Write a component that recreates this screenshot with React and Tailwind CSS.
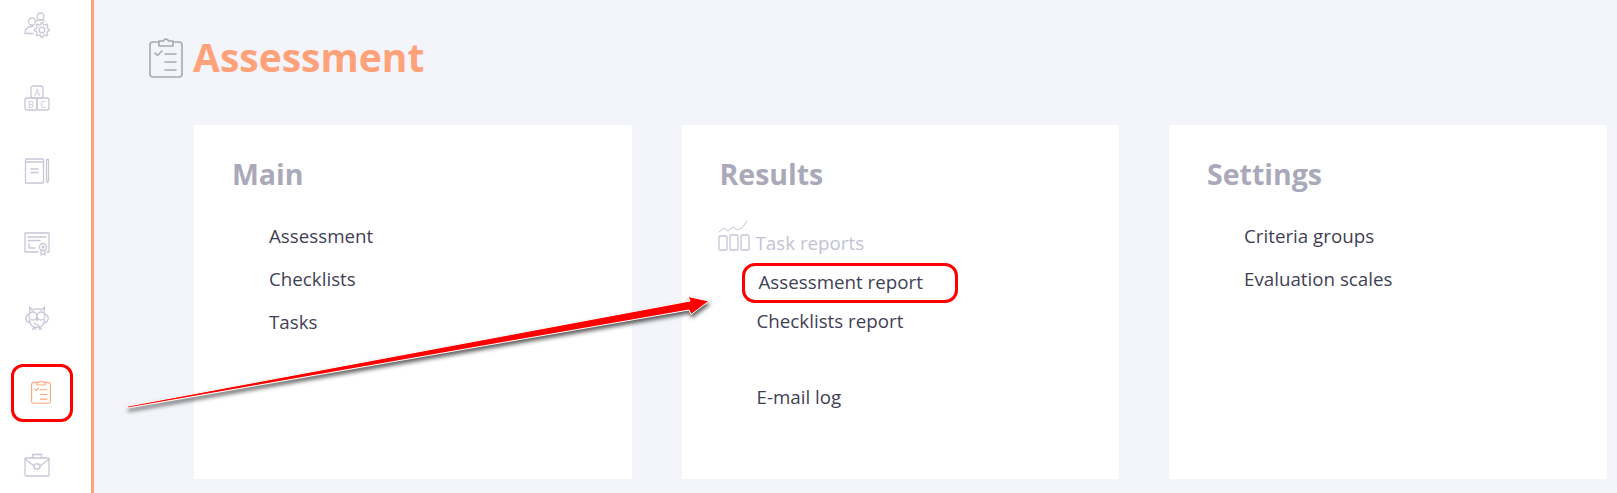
const font = { fontFamily: '"Open Sans", "Noto Sans", sans-serif' };

const stroke = {
  fill: 'none',
  stroke: 'currentColor',
  strokeWidth: 1.3,
  strokeLinecap: 'round',
  strokeLinejoin: 'round',
};

// outline of a toothed gear, built once
const gearPath = (cx, cy, outer, inner, teeth) => {
  const pts = [];
  const step = (Math.PI * 2) / teeth;
  for (let i = 0; i < teeth; i++) {
    const a = i * step;
    [[-0.3, inner], [-0.16, outer], [0.16, outer], [0.3, inner]].forEach(([t, r]) => {
      const b = a + t * step;
      pts.push(`${(cx + r * Math.cos(b)).toFixed(2)} ${(cy + r * Math.sin(b)).toFixed(2)}`);
    });
  }
  return `M${pts.join('L')}Z`;
};

function ClipboardIcon({ className, sw = 1.2 }) {
  return (
    <svg viewBox="0 0 34 42" className={className} {...stroke} strokeWidth={sw}>
      <path d="M10 6H4a3 3 0 0 0-3 3v29a3 3 0 0 0 3 3h26a3 3 0 0 0 3-3V9a3 3 0 0 0-3-3h-6" />
      <path d="M10 10V5h4.500a2.600 2.600 0 0 1 5 0H24v5z" />
      <path d="M6 17l2.500 2.500L13 15M16 18h11M16 26h11M16 34h11" />
    </svg>
  );
}

function PeopleGearIcon() {
  return (
    <svg viewBox="0 0 26 26" className="w-[26px] h-[26px]" {...stroke}>
      <circle cx="16.500" cy="4.500" r="3.500" />
      <circle cx="8" cy="9.500" r="3.500" />
      <path d="M1 21.500c-.3-4 2.500-7 6-7h2M1 21.500h8M12.500 9c1-.8 2.500-1.200 4-1.200s3 .4 4 1.200" />
      <path d={gearPath(18, 18, 7.500, 5.600, 8)} />
      <circle cx="18" cy="18" r="2.800" />
    </svg>
  );
}

function BlocksIcon() {
  const letter = 'text-[9px] fill-current';
  return (
    <svg viewBox="0 0 26 26" className="w-[26px] h-[26px]" {...stroke}>
      <rect x="7" y="1" width="12" height="12" rx="2" />
      <rect x="1" y="13" width="12" height="12" rx="2" />
      <rect x="13" y="13" width="12" height="12" rx="2" />
      <text x="13" y="10.500" textAnchor="middle" className={letter} stroke="none" style={font}>A</text>
      <text x="7" y="22.500" textAnchor="middle" className={letter} stroke="none" style={font}>B</text>
      <text x="19" y="22.500" textAnchor="middle" className={letter} stroke="none" style={font}>C</text>
    </svg>
  );
}

function NotebookIcon() {
  return (
    <svg viewBox="0 0 26 26" className="w-[26px] h-[26px]" {...stroke}>
      <rect x="1.500" y="1" width="18" height="24" rx="1" />
      <path d="M1.500 4h18M7 11h7M7 14.500h7" />
      <path d="M22.500 1.500h2v21l-1 2-1-2z" />
    </svg>
  );
}

function CertificateIcon() {
  return (
    <svg viewBox="0 0 26 26" className="w-[26px] h-[26px]" {...stroke}>
      <path d="M14 21H1V2h24v19h-2" />
      <path d="M4 6h18M4 9.500h12M5 13v4h6" />
      <circle cx="19" cy="16" r="3.500" />
      <circle cx="19" cy="16" r="1" />
      <path d="M17 19v5l2-1 2 1v-5" />
    </svg>
  );
}

function OwlIcon() {
  return (
    <svg viewBox="0 0 26 26" className="w-[26px] h-[26px]" {...stroke}>
      <path d="M6 9L5.500 3l3 3c3-1.500 6-1.500 9 0l3-3L20 9" />
      <circle cx="9" cy="12" r="4" />
      <circle cx="17" cy="12" r="4" />
      <path d="M13 13.500l-1.200 1.500 1.200 1.500 1.200-1.500zM5 10C2.500 11 1.500 13.500 2 15.500c.5 2 2 3 3.500 3M21 10c2.500 1 3.500 3.500 3 5.500-.5 2-2 3-3.500 3M5.500 16c.5 5 3.500 7.500 7.500 7.500s7-2.500 7.500-7.500M10 23.500l-1.500 2M10.500 23.500l1 2M16 23.500l-1 2M15.500 23.500l2 2M10 19l5 3" />
    </svg>
  );
}

function BriefcaseIcon() {
  return (
    <svg viewBox="0 0 26 24" className="w-[26px] h-[24px]" {...stroke}>
      <rect x="1" y="5" width="24" height="18" rx="1" />
      <path d="M8.500 5V1.500h9V5M1 6l9 7M25 6l-9 7" />
      <rect x="10" y="11" width="6" height="5" rx="2" />
    </svg>
  );
}

function TrendBarsIcon() {
  return (
    <svg viewBox="0 0 32 31" className="w-[32px] h-[31px] shrink-0 text-[#c6c6d6]" {...stroke}>
      <rect x="1" y="16" width="8" height="14" rx="1" />
      <rect x="12" y="15" width="8" height="15" rx="1" />
      <rect x="23" y="15" width="8" height="15" rx="1" />
      <path d="M1 12l5-4 4 3 5-4 4 3 5-2 5-7" strokeWidth="1" />
    </svg>
  );
}

const railIcons = [
  PeopleGearIcon,
  BlocksIcon,
  NotebookIcon,
  CertificateIcon,
  OwlIcon,
];

function Rail() {
  return (
    <aside className="w-[94px] shrink-0 bg-white border-r-[3px] border-[#ffa27a]">
      {railIcons.map((Icon, i) => (
        <div key={i} className="h-[73px] pt-[12px] pl-[24px] text-[#c8c8d8]">
          <Icon />
        </div>
      ))}
      <div className="h-[73px] pt-[14px] pl-[31px] text-[#ffa77f]">
        <ClipboardIcon className="w-[20px] h-[25px]" sw={1.9} />
      </div>
      <div className="pt-[15px] pl-[24px] text-[#c8c8d8]">
        <BriefcaseIcon />
      </div>
    </aside>
  );
}

function Card({ title, children }) {
  return (
    <section className="w-[437.500px] h-[354px] bg-white pl-[38px] pt-[29px]">
      <h2 className="text-[28.500px] leading-[40px] font-bold text-[#a9a9b9] mb-[30px]">{title}</h2>
      {children}
    </section>
  );
}

function MenuLink({ children, className = '' }) {
  return (
    <div className={`text-[18.750px] leading-[24px] text-[#3f3f56] pl-[37px] mb-[19px] ${className}`}>
      {children}
    </div>
  );
}

export default function App() {
  return (
    <div style={font} className="relative flex w-[1617px] h-[493px] overflow-hidden bg-[#f4f5fa]">
      <Rail />
      <main className="flex-1 min-w-0">
        <header className="flex items-center h-[125px] pl-[55px] pb-[12px]">
          <div className="text-[#a8a9ad]">
            <ClipboardIcon className="w-[34px] h-[42px]" sw={1.6} />
          </div>
          <h1 className="ml-[10px] text-[39px] leading-[50px] font-bold text-[#ffa27a]">Assessment</h1>
        </header>
        <div className="flex gap-[50px] pl-[100px]">
          <Card title="Main">
            <MenuLink>Assessment</MenuLink>
            <MenuLink>Checklists</MenuLink>
            <MenuLink>Tasks</MenuLink>
          </Card>
          <Card title="Results">
            <div className="flex items-end -ml-[2px] h-[36px] -mt-[9px] mb-[19px]">
              <TrendBarsIcon />
              <span className="ml-[6px] -mb-[4px] text-[18.750px] leading-[24px] text-[#c3c3d3]">Task reports</span>
            </div>
            <MenuLink className="pl-[39px] mb-[15px]!">Assessment report</MenuLink>
            <MenuLink className="mb-[52px]!">Checklists report</MenuLink>
            <MenuLink>E-mail log</MenuLink>
          </Card>
          <Card title="Settings">
            <MenuLink>Criteria groups</MenuLink>
            <MenuLink>Evaluation scales</MenuLink>
          </Card>
        </div>
      </main>

      {/* callouts drawn over the page */}
      <div className="absolute left-[11px] top-[364px] w-[62px] h-[58px] rounded-[12px] border-[3px] border-[#ff0000]" />
      <div className="absolute left-[742px] top-[263px] w-[216px] h-[40px] rounded-[13px] border-[3px] border-[#ff0000]" />
      <svg className="absolute left-0 top-0 w-[1617px] h-[493px] pointer-events-none drop-shadow-[1px_3px_2px_rgba(0,0,0,0.65)]" viewBox="0 0 1617 493">
        <path d="M127 406.300L690 301L688 296.500L709 301L691 314.500L689 310L127.500 408Z" fill="#ff0000" stroke="#ffffff" strokeWidth="1" strokeLinejoin="round" />
      </svg>
    </div>
  );
}
